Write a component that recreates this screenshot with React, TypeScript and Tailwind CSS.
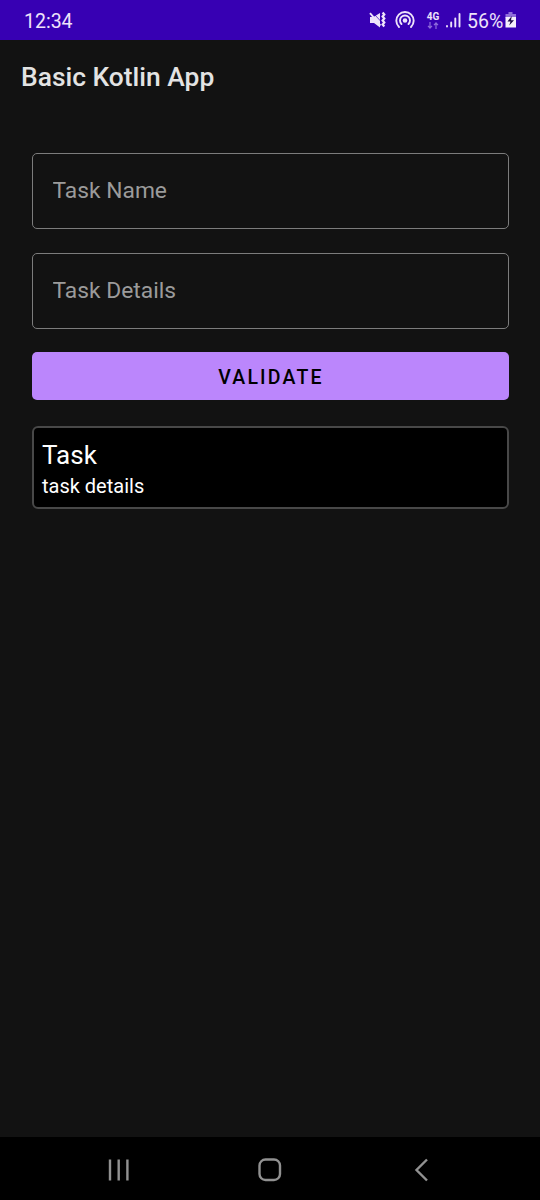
import React from "react";

function MutedIcon() {
  return (
    <svg className="h-5 w-[18px] shrink-0" viewBox="0 0 18 20" fill="#eee3fa">
      <path d="M1 7h3.500L11 3v14.500L5 13H1z" />
      <path d="M4 2.800L12 11.500" stroke="#3700b3" strokeWidth="0.700" />
      <path d="M1 3.200L11.500 15.500" stroke="#eee3fa" strokeWidth="1.900" />
      <path d="M13.600 2.500l1.700 2-1.700 2 1.700 2-1.700 2 1.700 2-1.700 2 1.700 2" fill="none" stroke="#eee3fa" strokeWidth="2.200" />
    </svg>
  );
}

function HotspotIcon() {
  return (
    <svg className="h-5 w-5 shrink-0" viewBox="0 0 20 20" fill="none" stroke="#eee3fa" strokeWidth="1.900" strokeLinecap="round">
      <path d="M4 17A8.700 8.700 0 1 1 16 17" />
      <path d="M6.500 14A5 5 0 1 1 13.500 14" />
      <circle cx="10" cy="10.500" r="2.300" fill="#eee3fa" stroke="none" />
    </svg>
  );
}

function NetworkIcon() {
  return (
    <div className="flex w-[14px] shrink-0 flex-col items-center pt-[1px]">
      <span className="h-[10px] text-[10px] leading-[10px] font-bold">4G</span>
      <svg className="h-[7px] w-3" viewBox="0 0 12 7" fill="none" stroke="#8f6ddb" strokeWidth="1.200">
        <path d="M3 0v6M1 3.800l2 2.200 2-2.200M9 7V1M7 3.200L9 1l2 2.200" />
      </svg>
    </div>
  );
}

function SignalIcon() {
  return (
    <svg className="h-4 w-[15px] shrink-0" viewBox="0 0 15 16" stroke="#eee3fa" strokeWidth="1.900" strokeLinecap="round">
      <path d="M1 14v0.500M5.200 10.500v4M9.300 6.500v8M13.500 2v12.500" />
    </svg>
  );
}

function BatteryIcon() {
  return (
    <svg className="h-4 w-3 shrink-0" viewBox="0 0 12 16">
      <path d="M3.500 0h4v2H11v4H0.500V2h3z" fill="#8f6ddb" />
      <path d="M0.500 5h10.500v10.500H0.500z" fill="#f5effc" />
      <path d="M6.800 4L2.500 9.500h3L4.200 13.500 9 8.200H6z" fill="#1b0a47" />
    </svg>
  );
}

function StatusBar() {
  return (
    <header className="flex h-[39.500px] shrink-0 items-center bg-[#3700b3] pl-6 text-[#eee3fa]">
      <span className="w-[345px] pt-[4px] text-[19.500px] leading-6">12:34</span>
      <MutedIcon />
      <div className="ml-[7.500px]">
        <HotspotIcon />
      </div>
      <div className="ml-[11.500px]">
        <NetworkIcon />
      </div>
      <div className="ml-[5.500px]">
        <SignalIcon />
      </div>
      <span className="ml-[6.500px] w-[38px] pt-[4px] text-[19.500px] leading-6">56%</span>
      <BatteryIcon />
    </header>
  );
}

function Field({ label }: { label: string }) {
  return (
    <input
      aria-label={label}
      placeholder={label}
      className="h-[76px] w-full rounded-[5px] border border-[#7c7c7c] bg-transparent px-5 pb-[2px] text-[22.800px] text-white outline-none placeholder:text-[#9b9b9b]"
    />
  );
}

function NavBar() {
  return (
    <nav className="flex h-[63px] shrink-0 items-center justify-between bg-black pt-[3px] pr-[107px] pl-[107px]">
      <svg className="h-6 w-6" viewBox="0 0 24 24" stroke="#919191" strokeWidth="2.400">
        <path d="M3 1.500v21M11.700 1.500v21M20.400 1.500v21" />
      </svg>
      <svg className="h-6 w-6" viewBox="0 0 24 24" fill="none" stroke="#919191" strokeWidth="2.400">
        <rect x="1.500" y="1.500" width="20.500" height="20.500" rx="6" />
      </svg>
      <svg className="h-6 w-6" viewBox="0 0 24 24" fill="none" stroke="#919191" strokeWidth="2.400">
        <path d="M18 1.500L7.500 12 18 22.500" />
      </svg>
    </nav>
  );
}

export default function App() {
  return (
    <div className="flex h-[1200px] w-[540px] flex-col overflow-hidden bg-[#121212] font-[Roboto,sans-serif]">
      <StatusBar />
      <h1 className="flex h-[76px] shrink-0 items-center pt-[1px] pl-[21px] text-[26.400px] font-medium text-[#e3e3e3]">Basic Kotlin App</h1>
      <main className="flex flex-1 flex-col pt-[37.500px] pr-[31.500px] pl-[31.500px]">
        <div className="flex flex-col gap-6">
          <Field label="Task Name" />
          <Field label="Task Details" />
          <button className="-mt-[1px] h-12 rounded-[5px] bg-[#bb86fc] pt-[3px] pl-[2px] text-[19.500px] font-medium tracking-[2.200px] text-black">VALIDATE</button>
        </div>
        <article className="mt-[26px] h-[83px] rounded-[6px] border-[2.500px] border-[#484848] bg-black pt-[10px] pr-2 pl-[8.500px] text-white">
          <h2 className="text-[26px] leading-[34px]">Task</h2>
          <p className="text-[20px] leading-7">task details</p>
        </article>
      </main>
      <NavBar />
    </div>
  );
}
